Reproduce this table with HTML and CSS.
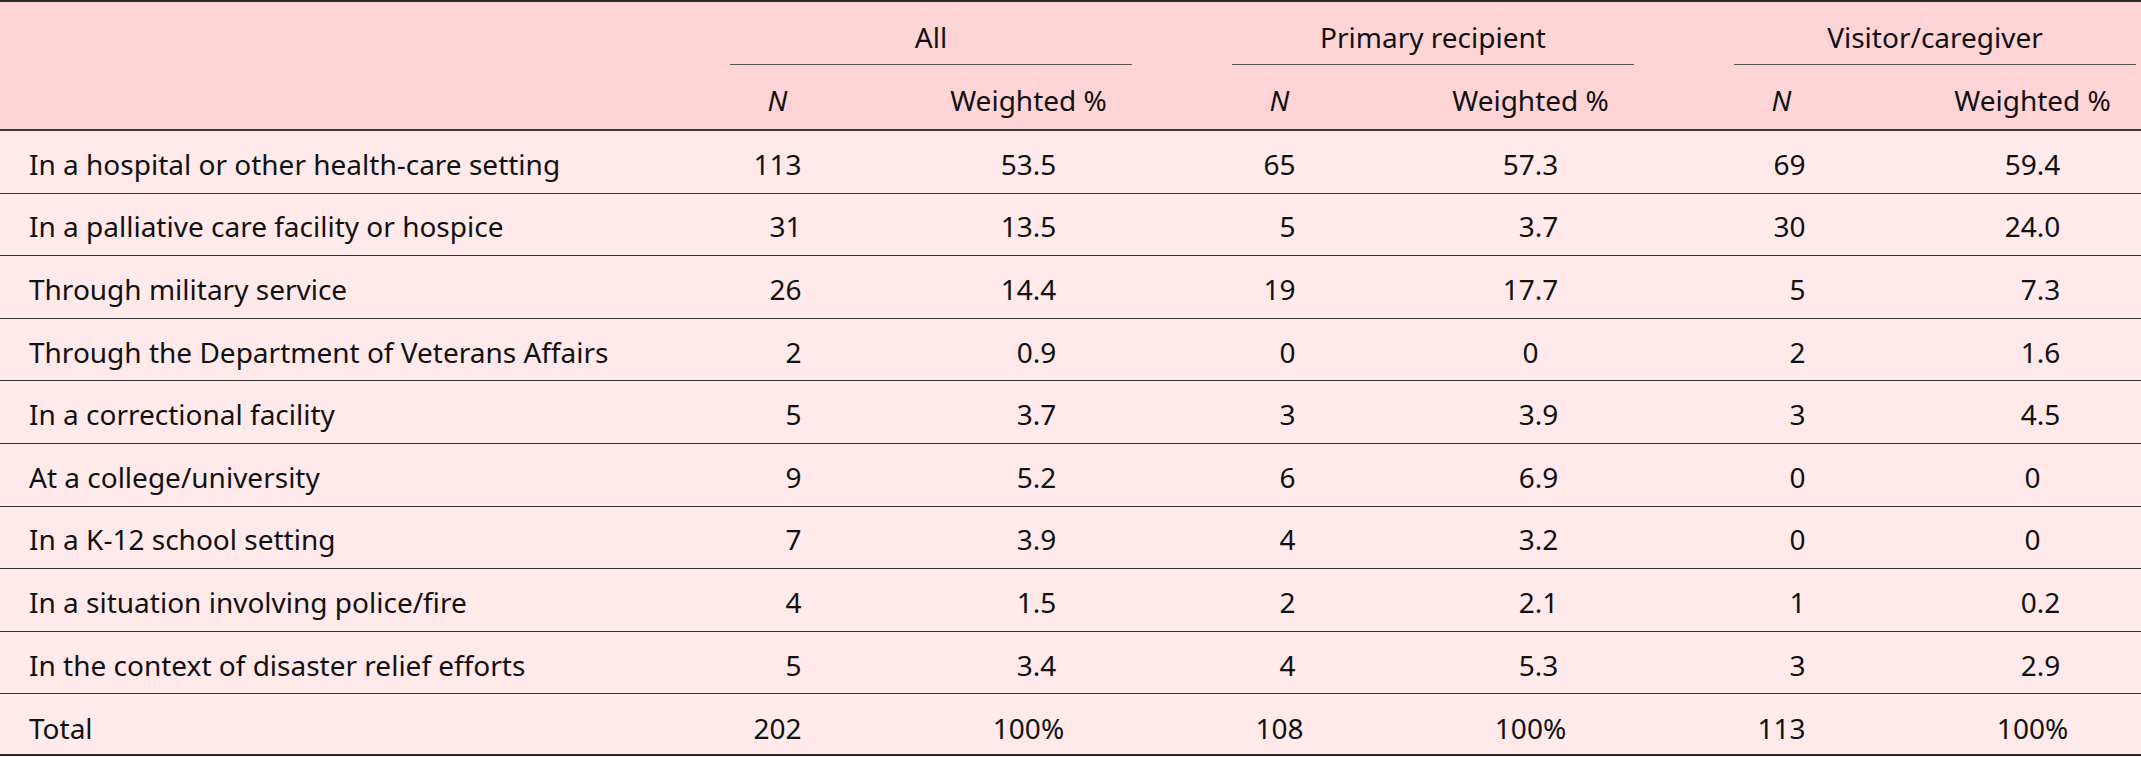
FILE: index.html
```html
<!DOCTYPE html>
<html lang="en">
<head>
<meta charset="utf-8">
<title>Table</title>
<link rel="stylesheet" href="styles.css">
</head>
<body>
<table class="data">
  <colgroup>
    <col class="c-label">
    <col class="c-num"><col class="c-num">
    <col class="c-num"><col class="c-num">
    <col class="c-num"><col class="c-num">
  </colgroup>
  <thead>
    <tr class="group-row">
      <th class="blank"></th>
      <th colspan="2" class="group"><div class="group-inner">All</div></th>
      <th colspan="2" class="group"><div class="group-inner">Primary recipient</div></th>
      <th colspan="2" class="group"><div class="group-inner">Visitor/caregiver</div></th>
    </tr>
    <tr class="sub-row">
      <th class="blank"></th>
      <th class="sub"><i>N</i></th><th class="sub">Weighted %</th>
      <th class="sub"><i>N</i></th><th class="sub">Weighted %</th>
      <th class="sub"><i>N</i></th><th class="sub">Weighted %</th>
    </tr>
  </thead>
  <tbody>
    <tr>
      <td class="label">In a hospital or other health-care setting</td>
      <td class="num"><span class="w3">113</span></td><td class="num"><span class="wd">53.5</span></td>
      <td class="num"><span class="w2">65</span></td><td class="num"><span class="wd">57.3</span></td>
      <td class="num"><span class="w3">69</span></td><td class="num"><span class="wd">59.4</span></td>
    </tr>
    <tr>
      <td class="label">In a palliative care facility or hospice</td>
      <td class="num"><span class="w3">31</span></td><td class="num"><span class="wd">13.5</span></td>
      <td class="num"><span class="w2">5</span></td><td class="num"><span class="wd">3.7</span></td>
      <td class="num"><span class="w3">30</span></td><td class="num"><span class="wd">24.0</span></td>
    </tr>
    <tr>
      <td class="label">Through military service</td>
      <td class="num"><span class="w3">26</span></td><td class="num"><span class="wd">14.4</span></td>
      <td class="num"><span class="w2">19</span></td><td class="num"><span class="wd">17.7</span></td>
      <td class="num"><span class="w3">5</span></td><td class="num"><span class="wd">7.3</span></td>
    </tr>
    <tr>
      <td class="label">Through the Department of Veterans Affairs</td>
      <td class="num"><span class="w3">2</span></td><td class="num"><span class="wd">0.9</span></td>
      <td class="num"><span class="w2">0</span></td><td class="num">0</td>
      <td class="num"><span class="w3">2</span></td><td class="num"><span class="wd">1.6</span></td>
    </tr>
    <tr>
      <td class="label">In a correctional facility</td>
      <td class="num"><span class="w3">5</span></td><td class="num"><span class="wd">3.7</span></td>
      <td class="num"><span class="w2">3</span></td><td class="num"><span class="wd">3.9</span></td>
      <td class="num"><span class="w3">3</span></td><td class="num"><span class="wd">4.5</span></td>
    </tr>
    <tr>
      <td class="label">At a college/university</td>
      <td class="num"><span class="w3">9</span></td><td class="num"><span class="wd">5.2</span></td>
      <td class="num"><span class="w2">6</span></td><td class="num"><span class="wd">6.9</span></td>
      <td class="num"><span class="w3">0</span></td><td class="num">0</td>
    </tr>
    <tr>
      <td class="label">In a K-12 school setting</td>
      <td class="num"><span class="w3">7</span></td><td class="num"><span class="wd">3.9</span></td>
      <td class="num"><span class="w2">4</span></td><td class="num"><span class="wd">3.2</span></td>
      <td class="num"><span class="w3">0</span></td><td class="num">0</td>
    </tr>
    <tr>
      <td class="label">In a situation involving police/fire</td>
      <td class="num"><span class="w3">4</span></td><td class="num"><span class="wd">1.5</span></td>
      <td class="num"><span class="w2">2</span></td><td class="num"><span class="wd">2.1</span></td>
      <td class="num"><span class="w3">1</span></td><td class="num"><span class="wd">0.2</span></td>
    </tr>
    <tr>
      <td class="label">In the context of disaster relief efforts</td>
      <td class="num"><span class="w3">5</span></td><td class="num"><span class="wd">3.4</span></td>
      <td class="num"><span class="w2">4</span></td><td class="num"><span class="wd">5.3</span></td>
      <td class="num"><span class="w3">3</span></td><td class="num"><span class="wd">2.9</span></td>
    </tr>
    <tr class="total">
      <td class="label">Total</td>
      <td class="num"><span class="w3">202</span></td><td class="num">100%</td>
      <td class="num">108</td><td class="num">100%</td>
      <td class="num"><span class="w3">113</span></td><td class="num">100%</td>
    </tr>
  </tbody>
</table>
</body>
</html>
```

FILE: styles.css
```css
html, body {
  margin: 0;
  padding: 0;
  overflow: hidden;
  background: #ffe9ea;
}

.data {
  width: 2158px;
  table-layout: fixed;
  border-collapse: separate;
  border-spacing: 0;
  font-family: "Noto Sans", "Open Sans", sans-serif;
  font-size: 28px;
  color: #111;
}

.c-label { width: 652px; }
.c-num { width: 251px; }

thead th {
  background: #ffd4d6;
  font-weight: normal;
  padding: 0;
}

.group-row { height: 66px; }
.group-row th {
  border-top: 2px solid #2a2a2a;
  vertical-align: bottom;
  padding-bottom: 1px;
}

.group-inner {
  margin: 0 22px 0 78px;
  padding-bottom: 8px;
  line-height: 38px;
  text-align: center;
  border-bottom: 1px solid #555;
}

.sub-row { height: 65px; }
.sub-row th {
  border-bottom: 2px solid #3a3a3a;
  text-align: center;
  vertical-align: middle;
  padding-top: 4px;
  line-height: 38px;
}

.sub i { font-style: italic; }

tbody tr { height: 62.6px; }
tbody td {
  background: #ffe9ea;
  border-bottom: 1px solid #333;
  padding: 4px 0 0;
  line-height: 38px;
  vertical-align: middle;
}

tbody tr.total { height: 61.6px; }
tbody tr.total td {
  border-bottom: 2px solid #2a2a2a;
  padding-top: 8px;
}

.label {
  padding-left: 29px !important;
  text-align: left;
}

.num { text-align: center; }

.w2, .w3, .wd {
  display: inline-block;
  text-align: right;
}
.w2 { width: 2ch; }
.w3 { width: 3ch; }
.wd { width: calc(3ch + 0.268em); }
```
